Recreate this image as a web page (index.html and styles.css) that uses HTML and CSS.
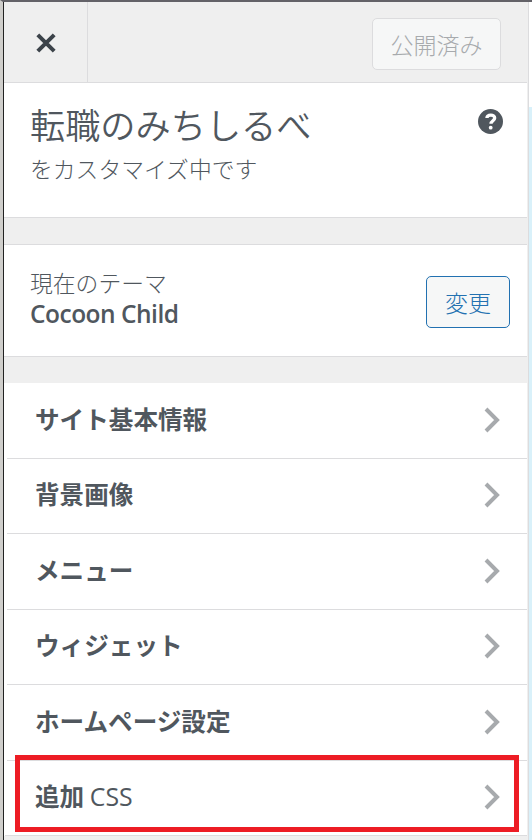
FILE: index.html
```
<!DOCTYPE html>
<html lang="ja">
<head>
  <meta charset="UTF-8" />
  <meta name="viewport" content="width=device-width, initial-scale=1.0" />
  <title>カスタマイズ</title>
  <link rel="stylesheet" href="styles.css">
</head>
<body>
  <div class="customizer">
    <div class="sidebar">
      <!-- Close and publish buttons -->
      <header class="header">
        <button class="close" aria-label="閉じる">
          <svg width="20" height="20" viewBox="0 0 20 20"><path d="M1.8 1.8L18.2 18.2M18.2 1.8L1.8 18.2" /></svg>
        </button>
        <button class="button published" disabled>公開済み</button>
      </header>

      <section class="info">
        <div>
          <h1 class="site-title">転職のみちしるべ</h1>
          <p class="notice">をカスタマイズ中です</p>
        </div>
        <svg class="help" width="25" height="25" viewBox="0 0 25 25">
          <circle cx="12.5" cy="12.5" r="12.5" />
          <path d="M8.9 9C9.1 5.1 16.7 5 16.7 9.1C16.7 11.7 13 11.8 13 14.8" />
          <circle class="dot" cx="12.7" cy="18.7" r="1.9" />
        </svg>
      </section>

      <section class="theme">
        <div>
          <p class="theme-label">現在のテーマ</p>
          <p class="theme-name">Cocoon Child</p>
        </div>
        <button class="button change">変更</button>
      </section>

      <!-- Customizer sections -->
      <ul class="menu">
        <li class="item"><span>サイト基本情報</span><svg class="arrow" viewBox="0 0 16 26"><path d="M2 2L13 13L2 24" /></svg></li>
        <li class="item"><span>背景画像</span><svg class="arrow" viewBox="0 0 16 26"><path d="M2 2L13 13L2 24" /></svg></li>
        <li class="item"><span>メニュー</span><svg class="arrow" viewBox="0 0 16 26"><path d="M2 2L13 13L2 24" /></svg></li>
        <li class="item"><span>ウィジェット</span><svg class="arrow" viewBox="0 0 16 26"><path d="M2 2L13 13L2 24" /></svg></li>
        <li class="item"><span>ホームページ設定</span><svg class="arrow" viewBox="0 0 16 26"><path d="M2 2L13 13L2 24" /></svg></li>
        <li class="item marked"><span>追加 <span class="latin">CSS</span></span><svg class="arrow" viewBox="0 0 16 26"><path d="M2 2L13 13L2 24" /></svg></li>
      </ul>
    </div>
    <div class="preview"></div>
  </div>
</body>
</html>
```

FILE: styles.css
```
*, *::before, *::after {
  box-sizing: border-box;
}
body {
  margin: 0;
  background: #efefef;
  color: #50575e;
  font-family: "Noto Sans CJK JP", sans-serif;
  font-weight: 300;
}
h1, p, ul {
  margin: 0;
  padding: 0;
  font-weight: 300;
}
.customizer {
  display: flex;
  height: 840px;
  overflow: hidden;
  border-top: 2px solid #636268;
  border-left: 3px solid #cfcecb;
}
.sidebar {
  width: 526px;
  border-left: 1px solid #222;
  border-right: 1px solid #dcdcde;
  padding-right: 1px;
}
.preview {
  flex: 1;
  background: linear-gradient(#fff 105px, #d9f1fa 105px);
}
.header {
  display: flex;
  justify-content: space-between;
  height: 81px;
  padding-right: 26px;
  border-bottom: 1px solid #dcdcde;
}
.close {
  width: 84px;
  padding: 1px 0 0 1px;
  background: none;
  border: 0;
  border-right: 1px solid #dcdcde;
}
.close svg {
  display: block;
  margin: 0 auto;
}
.close path {
  fill: none;
  stroke: #3c434a;
  stroke-width: 4;
}
.button {
  height: 52px;
  padding: 0;
  border: 1px solid #dcdcde;
  border-radius: 5px;
  background: #f6f7f7;
  font-family: inherit;
  font-size: 23px;
  font-weight: 300;
  line-height: 50px;
}
.published {
  width: 129px;
  margin-top: 16px;
  color: #a7aaad;
}
.info {
  display: flex;
  justify-content: space-between;
  height: 135px;
  padding: 20px 24px 0 26px;
  background: #fff;
  border-bottom: 1px solid #dcdcde;
}
.site-title {
  font-size: 35.2px;
  font-weight: 350;
  line-height: 42px;
  white-space: nowrap;
}
.notice {
  font-size: 22.8px;
  line-height: 47px;
}
.help {
  margin-top: 6px;
  fill: #50575e;
}
.help path {
  fill: none;
  stroke: #fff;
  stroke-width: 3.3;
}
.help .dot {
  fill: #fff;
}
.theme {
  display: flex;
  justify-content: space-between;
  height: 113px;
  margin-top: 26px;
  padding: 23px 17px 0 26px;
  background: #fff;
  border-top: 1px solid #dcdcde;
  border-bottom: 1px solid #dcdcde;
}
.theme-label {
  font-size: 22.8px;
  line-height: 30px;
}
.theme-name {
  font-family: "Open Sans", sans-serif;
  font-size: 24.5px;
  font-weight: 600;
  letter-spacing: -0.5px;
  line-height: 32px;
}
.change {
  width: 84px;
  margin-top: 8px;
  border-color: #2271b1;
  color: #2271b1;
}
.menu {
  margin-top: 26px;
  list-style: none;
}
.item {
  position: relative;
  display: flex;
  align-items: center;
  justify-content: space-between;
  height: 75.5px;
  padding: 0 27px 2px 31px;
  background: #fff;
  font-size: 24.6px;
  font-weight: 700;
}
.item > span {
  padding-bottom: 4px;
}
/* row divider starts a little inside the panel edge */
.item::after {
  content: "";
  position: absolute;
  left: 3px;
  right: 0;
  bottom: 0;
  height: 1px;
  background: #dcdcde;
}
.item:last-child::after {
  left: 1px;
}
.arrow {
  width: 16px;
  height: 26px;
}
.arrow path {
  fill: none;
  stroke: #a7aaad;
  stroke-width: 4;
}
.latin {
  font-family: "Open Sans", sans-serif;
  font-size: 24.8px;
  font-weight: 500;
}
.marked::before {
  content: "";
  position: absolute;
  top: -6px;
  left: 11px;
  width: 504px;
  height: 77px;
  border: 5px solid #ed1c24;
  z-index: 1;
}
```
